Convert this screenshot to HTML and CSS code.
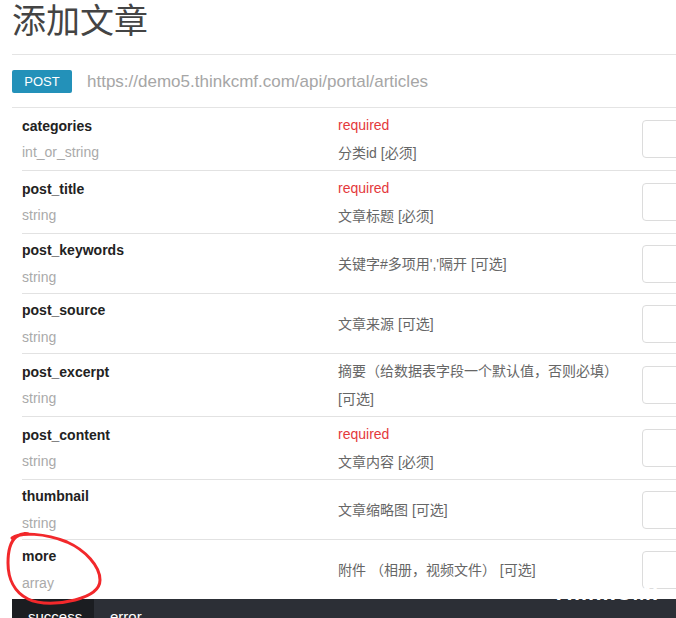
FILE: index.html
```html
<!DOCTYPE html>
<html lang="zh-CN">
<head>
  <meta charset="UTF-8" />
  <meta name="viewport" content="width=device-width, initial-scale=1.0"/>
  <title>添加文章</title>
  <link rel="stylesheet" href="styles.css">
</head>
<body>

<div class="sheet">
  <div class="page">
    <h1>添加文章</h1>
    <hr>

    <div class="endpoint">
      <span class="method">POST</span>
      <span class="url">https://demo5.thinkcmf.com/api/portal/articles</span>
    </div>
    <hr>

    <div class="params">
      <div class="param">
        <div class="name"><strong>categories</strong><span class="type">int_or_string</span></div>
        <div class="desc"><span class="required">required</span><span>分类id [必须]</span></div>
        <div class="field"><input type="text"></div>
      </div>
      <div class="param">
        <div class="name"><strong>post_title</strong><span class="type">string</span></div>
        <div class="desc"><span class="required">required</span><span>文章标题 [必须]</span></div>
        <div class="field"><input type="text"></div>
      </div>
      <div class="param">
        <div class="name"><strong>post_keywords</strong><span class="type">string</span></div>
        <div class="desc"><span>关键字#多项用','隔开 [可选]</span></div>
        <div class="field"><input type="text"></div>
      </div>
      <div class="param">
        <div class="name"><strong>post_source</strong><span class="type">string</span></div>
        <div class="desc"><span>文章来源 [可选]</span></div>
        <div class="field"><input type="text"></div>
      </div>
      <div class="param">
        <div class="name"><strong>post_excerpt</strong><span class="type">string</span></div>
        <div class="desc"><span>摘要（给数据表字段一个默认值，否则必填） [可选]</span></div>
        <div class="field"><input type="text"></div>
      </div>
      <div class="param">
        <div class="name"><strong>post_content</strong><span class="type">string</span></div>
        <div class="desc"><span class="required">required</span><span>文章内容 [必须]</span></div>
        <div class="field"><input type="text"></div>
      </div>
      <div class="param">
        <div class="name"><strong>thumbnail</strong><span class="type">string</span></div>
        <div class="desc"><span>文章缩略图 [可选]</span></div>
        <div class="field"><input type="text"></div>
      </div>
      <div class="param">
        <div class="name"><strong>more</strong><span class="type">array</span></div>
        <div class="desc"><span>附件 （相册，视频文件） [可选]</span></div>
        <div class="field"><input type="text"></div>
      </div>
    </div>

    <div class="response">
      <div class="tabs">
        <span class="tab active">success</span>
        <span class="tab">error</span>
      </div>
      <span class="watermark">ThinkCMF</span>
    </div>
  </div>

  <!-- hand-drawn mark around the "more" param -->
  <svg class="mark" width="110" height="82" viewBox="0 0 110 82">
    <path d="M12,10 C20,4 45,5 67,14 C85,22 100,38 100,52 C100,62 90,68 75,72 C60,76 40,77 28,71 C14,64 8,50 8,35 C8,22 10,14 16,9 C20,6 24,5 28,6"
          fill="none" stroke="#f2282b" stroke-width="3" stroke-linecap="round"/>
  </svg>
</div>

</body>
</html>
```

FILE: styles.css
```css
html, body {
  margin: 0;
  overflow: hidden;
}

body {
  font-family: "Liberation Sans", "Noto Sans CJK SC", sans-serif;
  font-size: 14px;
  color: #333;
  background: #fff;
}

.sheet {
  position: relative;
  width: 676px;
  height: 618px;
}

.page {
  margin-left: 12px;
  width: 780px;
}

h1 {
  margin: 0;
  font-size: 34px;
  line-height: 38px;
  font-weight: normal;
  color: #444;
  font-family: "Noto Sans CJK SC", sans-serif;
}

hr {
  margin: 16px 0 0;
  border: 0;
  border-top: 1px solid #e4e4e4;
}

.endpoint + hr {
  margin-top: 0;
}

.endpoint {
  display: flex;
  align-items: center;
  gap: 15px;
  padding: 15px 0 14px;
}

.method {
  display: inline-block;
  width: 60px;
  height: 23px;
  line-height: 23px;
  text-align: center;
  background: #2391b9;
  color: #fff;
  font-size: 13px;
  border-radius: 2px;
}

.url {
  font-size: 17px;
  color: #a6a6a6;
}

.params {
  margin-left: 10px;
}

.param {
  display: grid;
  grid-template-columns: 316px 304px 1fr;
  align-items: center;
  padding: 3px 0;
  border-top: 1px solid #e2e2e2;
}

.param:first-child {
  border-top: 0;
}

.name {
  display: flex;
  flex-direction: column;
  line-height: 26.5px;
}

.name strong {
  color: #222;
}

.type {
  color: #aaa;
}

.desc {
  display: flex;
  flex-direction: column;
  line-height: 28px;
  color: #666;
  padding-right: 10px;
}

.required {
  color: #e4393c;
}

.field input {
  display: block;
  box-sizing: border-box;
  width: 200px;
  height: 38px;
  border: 1px solid #dcdcdc;
  border-radius: 4px;
  background: #fff;
}

.response {
  position: relative;
  background: #2c2f36;
  height: 40px;
}

.tabs {
  display: flex;
}

.tab {
  padding: 8px 16px 6px;
  line-height: 20px;
  font-size: 15px;
  color: #fff;
}

.tab.active {
  background: #1b1d21;
  width: 50px;
}

.watermark {
  position: absolute;
  left: 540px;
  top: -16px;
  font-size: 22px;
  line-height: 20px;
  font-weight: bold;
  letter-spacing: 1px;
  color: #fff;
}

.mark {
  position: absolute;
  left: 0;
  top: 528px;
}
```
